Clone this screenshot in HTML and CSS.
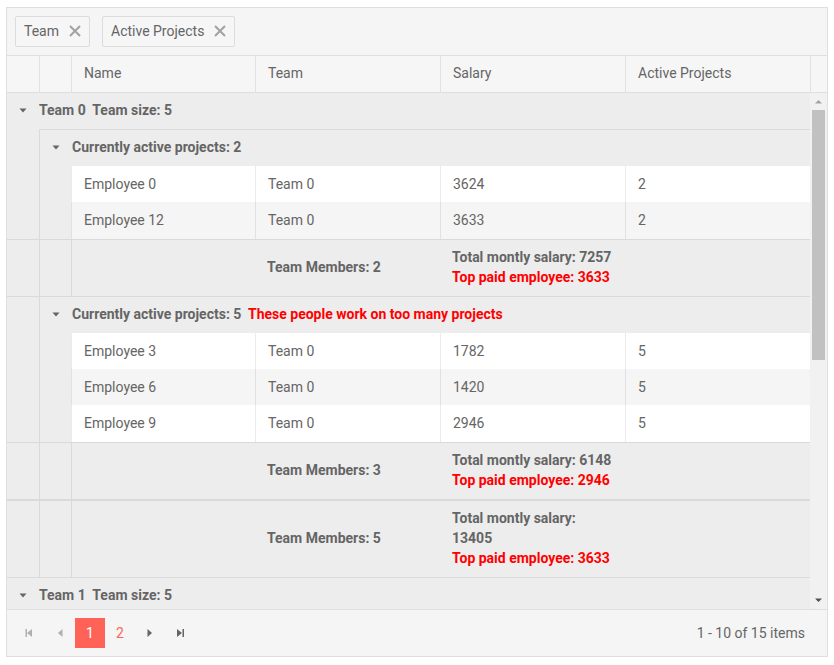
FILE: index.html
```html
<!DOCTYPE html>
<html lang="en">
<head>
<meta charset="utf-8">
<title>Grid</title>
<link rel="stylesheet" href="styles.css">
</head>
<body>
<div class="grid">
  <div class="group-panel">
    <span class="chip">Team<svg class="chip-x" viewBox="0 0 16 16"><path d="M3 3L13 13M13 3L3 13"/></svg></span>
    <span class="chip">Active Projects<svg class="chip-x" viewBox="0 0 16 16"><path d="M3 3L13 13M13 3L3 13"/></svg></span>
  </div>

  <div class="grid-header">
    <table class="tbl">
      <colgroup><col class="c-g"><col class="c-g"><col class="c-name"><col class="c-col"><col class="c-col"><col class="c-col"></colgroup>
      <tr><th class="nob"></th><th></th><th>Name</th><th>Team</th><th>Salary</th><th>Active Projects</th></tr>
    </table>
    <div class="hdr-spacer"></div>
  </div>

  <div class="grid-body">
    <div class="viewport">
      <table class="tbl body">
        <colgroup><col class="c-g"><col class="c-g"><col class="c-name"><col class="c-col"><col class="c-col"><col class="c-col"></colgroup>
        <tr class="grow">
          <td colspan="6"><svg class="caret" viewBox="0 0 16 16"><path d="M4.5 6.5h7L8 10.5z"/></svg>Team 0&nbsp; Team size: 5</td>
        </tr>
        <tr class="grow">
          <td class="gc"></td>
          <td colspan="5" class="bl bt"><svg class="caret" viewBox="0 0 16 16"><path d="M4.5 6.5h7L8 10.5z"/></svg>Currently active projects: 2</td>
        </tr>
        <tr class="row">
          <td class="gc"></td><td class="gc bl"></td><td class="bl">Employee 0</td><td class="bl">Team 0</td><td class="bl">3624</td><td class="bl">2</td>
        </tr>
        <tr class="row alt">
          <td class="gc"></td><td class="gc bl"></td><td class="bl">Employee 12</td><td class="bl">Team 0</td><td class="bl">3633</td><td class="bl">2</td>
        </tr>
        <tr class="gfoot">
          <td></td><td class="bl"></td><td class="bl"></td>
          <td class="fcount">Team Members: 2</td>
          <td class="fsal"><div>Total montly salary: 7257</div><div class="red">Top paid employee: 3633</div></td>
          <td></td>
        </tr>
        <tr class="grow">
          <td class="gc"></td>
          <td colspan="5" class="bl"><svg class="caret" viewBox="0 0 16 16"><path d="M4.5 6.5h7L8 10.5z"/></svg>Currently active projects: 5&nbsp; <span class="red">These people work on too many projects</span></td>
        </tr>
        <tr class="row">
          <td class="gc"></td><td class="gc bl"></td><td class="bl">Employee 3</td><td class="bl">Team 0</td><td class="bl">1782</td><td class="bl">5</td>
        </tr>
        <tr class="row alt">
          <td class="gc"></td><td class="gc bl"></td><td class="bl">Employee 6</td><td class="bl">Team 0</td><td class="bl">1420</td><td class="bl">5</td>
        </tr>
        <tr class="row">
          <td class="gc"></td><td class="gc bl"></td><td class="bl">Employee 9</td><td class="bl">Team 0</td><td class="bl">2946</td><td class="bl">5</td>
        </tr>
        <tr class="gfoot">
          <td></td><td class="bl"></td><td class="bl"></td>
          <td class="fcount">Team Members: 3</td>
          <td class="fsal"><div>Total montly salary: 6148</div><div class="red">Top paid employee: 2946</div></td>
          <td></td>
        </tr>
        <tr class="gfoot">
          <td></td><td class="bl"></td><td class="bl"></td>
          <td class="fcount">Team Members: 5</td>
          <td class="fsal"><div>Total montly salary:</div><div>13405</div><div class="red">Top paid employee: 3633</div></td>
          <td></td>
        </tr>
        <tr class="grow">
          <td colspan="6"><svg class="caret" viewBox="0 0 16 16"><path d="M4.5 6.5h7L8 10.5z"/></svg>Team 1&nbsp; Team size: 5</td>
        </tr>
      </table>
    </div>
    <div class="vscroll">
      <div class="sbtn"><svg viewBox="0 0 17 17" class="sarrow up"><path d="M5 10.5h7L8.5 7z"/></svg></div>
      <div class="thumb"></div>
      <div class="sfill"></div>
      <div class="sbtn"><svg viewBox="0 0 17 17" class="sarrow down"><path d="M5 6.5h7L8.5 10z"/></svg></div>
    </div>
  </div>

  <div class="pager">
    <span class="pbtn dis"><svg viewBox="0 0 16 16"><path d="M3.5 4h1.5v8H3.5z M10 4v8L5 8z"/></svg></span>
    <span class="pbtn dis"><svg viewBox="0 0 16 16"><path d="M10.5 4v8L6 8z"/></svg></span>
    <span class="pbtn sel">1</span>
    <span class="pbtn num">2</span>
    <span class="pbtn"><svg viewBox="0 0 16 16"><path d="M5.5 4v8L10 8z"/></svg></span>
    <span class="pbtn"><svg viewBox="0 0 16 16"><path d="M5 4v8L10 8z M10.5 4H12v8h-1.5z"/></svg></span>
    <span class="pinfo">1 - 10 of 15 items</span>
  </div>
</div>
</body>
</html>
```

FILE: styles.css
```css
* { box-sizing: border-box; }

body {
  margin: 0;
  background: #fff;
  font-family: Roboto, "Liberation Sans", sans-serif;
  font-size: 14px;
  line-height: 20px;
  color: #656565;
}

.grid {
  margin: 7px 6px;
  width: 822px;
  border: 1px solid #dfdfdf;
  background: #fff;
}

/* group panel */
.group-panel {
  display: flex;
  gap: 12px;
  padding: 8px;
  background: #f5f5f5;
  border-bottom: 1px solid #dfdfdf;
}

.chip {
  display: inline-flex;
  align-items: center;
  gap: 8px;
  height: 31px;
  padding: 0 6px 1px 8px;
  border: 1px solid #dcdcdc;
  border-radius: 2px;
  background: #f6f6f6;
}

.chip-x {
  width: 16px;
  height: 16px;
  fill: none;
  stroke: #a2a2a2;
  stroke-width: 2;
}

/* tables */
.tbl {
  width: 803px;
  table-layout: fixed;
  border-collapse: separate;
  border-spacing: 0;
}

.c-g { width: 32px; }
.c-name { width: 184px; }
.c-col { width: 185px; }

.grid-header {
  display: flex;
  background: #f6f6f6;
  border-bottom: 1px solid #dfdfdf;
}

.grid-header th {
  padding: 7px 12px 9px;
  height: 36px;
  font-weight: normal;
  text-align: left;
  border-left: 1px solid rgba(0, 0, 0, 0.08);
  white-space: nowrap;
}

.grid-header th.nob { border-left: 0; }

.hdr-spacer {
  width: 17px;
  border-left: 1px solid rgba(0, 0, 0, 0.08);
}

.grid-body {
  display: flex;
  height: 516px;
}

.viewport {
  width: 803px;
  overflow: hidden;
}

.body td {
  padding: 8px 12px;
  border: 0 solid rgba(0, 0, 0, 0.08);
  vertical-align: middle;
  white-space: nowrap;
}

.body td.bl { border-left-width: 1px; }
.body td.bt { border-top-width: 1px; }

.body td.gc {
  padding: 0;
  background: #ededed;
}

.grow td {
  height: 36px;
  padding-top: 7px;
  padding-bottom: 9px;
  background: #ededed;
  font-weight: bold;
}

.grow td.gc { padding: 0; }

.row td {
  height: 36.33px;
  background: #fff;
}

.row.alt td { background: #f5f5f5; }

.row td.gc { background: #ededed; }

.gfoot td {
  background: #ededed;
  font-weight: bold;
  border-top-width: 1px;
  border-bottom-width: 1px;
}

.gfoot td.fcount { padding-top: 7px; padding-bottom: 9px; }

.gfoot td.fsal { vertical-align: top; padding-top: 7px; padding-bottom: 9px; }

.red { color: #ff0000; }

.caret {
  width: 16px;
  height: 16px;
  margin: 0 8px 0 -4px;
  vertical-align: -3px;
  fill: #656565;
}

/* scrollbar */
.vscroll {
  width: 17px;
  display: flex;
  flex-direction: column;
  background: #f1f1f1;
}

.sbtn {
  height: 17px;
  flex: none;
}

.sarrow {
  display: block;
  width: 17px;
  height: 17px;
}

.sarrow.up { fill: #a3a3a3; }
.sarrow.down { fill: #505050; }

.thumb {
  height: 250px;
  margin: 0 2px;
  background: #c1c1c1;
  flex: none;
}

.sfill { flex: 1; }

/* pager */
.pager {
  display: flex;
  align-items: center;
  padding: 8px;
  background: #f5f5f5;
  border-top: 1px solid #dfdfdf;
}

.pbtn {
  width: 30px;
  height: 30px;
  display: flex;
  align-items: center;
  justify-content: center;
  fill: #656565;
}

.pbtn svg {
  width: 16px;
  height: 16px;
}

.pbtn.dis { fill: #b0b0b0; }

.pbtn.sel {
  background: #ff6358;
  color: #fff;
}

.pbtn.num { color: #ff6358; }

.pinfo {
  margin-left: auto;
  margin-right: 14px;
}
```
